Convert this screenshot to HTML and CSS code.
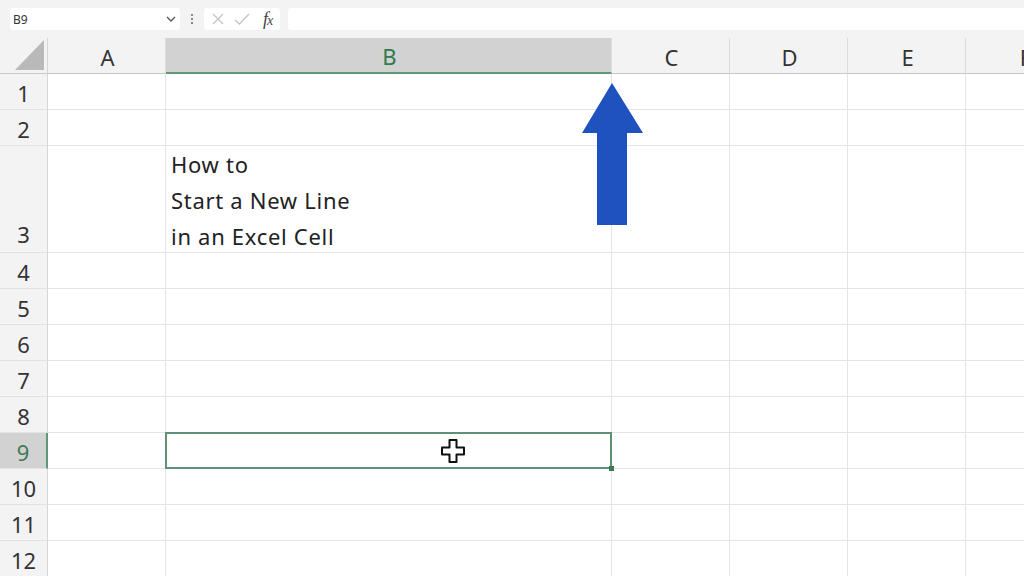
FILE: index.html
```html
<!DOCTYPE html>
<html>
<head>
<meta charset="utf-8">
<link rel="stylesheet" href="styles.css">
</head>
<body>
<div class="app">
  <div class="toolbar">
    <div class="namebox">
      <span class="ref">B9</span>
      <svg class="chev" width="10" height="6" viewBox="0 0 10 6"><path d="M1 1 L5 5 L9 1" fill="none" stroke="#555" stroke-width="1.3"/></svg>
    </div>
    <div class="dots"><span></span><span></span><span></span></div>
    <div class="fxgroup">
      <svg width="14" height="14" viewBox="0 0 14 14"><path d="M2 2 L12 12 M12 2 L2 12" stroke="#c4c4c4" stroke-width="1.3" fill="none"/></svg>
      <svg width="16" height="14" viewBox="0 0 16 14"><path d="M1 8 L5.5 12 L15 2" stroke="#c4c4c4" stroke-width="1.3" fill="none"/></svg>
      <span class="fx"><i>f</i><i class="x">x</i></span>
    </div>
    <div class="formula"></div>
  </div>

  <div class="sheet">
    <div class="corner"><svg width="30" height="31" viewBox="0 0 30 31"><path d="M29 0 L29 30 L0 30 Z" fill="#b9b9b9"/></svg></div>
    <div class="ch">A</div><div class="ch selcol">B</div><div class="ch">C</div><div class="ch">D</div><div class="ch">E</div><div class="ch">F</div>

    <div class="rh">1</div><div class="c"></div><div class="c"></div><div class="c"></div><div class="c"></div><div class="c"></div><div class="c"></div>
    <div class="rh">2</div><div class="c"></div><div class="c"></div><div class="c"></div><div class="c"></div><div class="c"></div><div class="c"></div>
    <div class="rh tall">3</div><div class="c"></div><div class="c txt">How to<br>Start a New Line<br>in an Excel Cell</div><div class="c"></div><div class="c"></div><div class="c"></div><div class="c"></div>
    <div class="rh">4</div><div class="c"></div><div class="c"></div><div class="c"></div><div class="c"></div><div class="c"></div><div class="c"></div>
    <div class="rh">5</div><div class="c"></div><div class="c"></div><div class="c"></div><div class="c"></div><div class="c"></div><div class="c"></div>
    <div class="rh">6</div><div class="c"></div><div class="c"></div><div class="c"></div><div class="c"></div><div class="c"></div><div class="c"></div>
    <div class="rh">7</div><div class="c"></div><div class="c"></div><div class="c"></div><div class="c"></div><div class="c"></div><div class="c"></div>
    <div class="rh">8</div><div class="c"></div><div class="c"></div><div class="c"></div><div class="c"></div><div class="c"></div><div class="c"></div>
    <div class="rh selrow">9</div><div class="c"></div><div class="c active"></div><div class="c"></div><div class="c"></div><div class="c"></div><div class="c"></div>
    <div class="rh">10</div><div class="c"></div><div class="c"></div><div class="c"></div><div class="c"></div><div class="c"></div><div class="c"></div>
    <div class="rh">11</div><div class="c"></div><div class="c"></div><div class="c"></div><div class="c"></div><div class="c"></div><div class="c"></div>
    <div class="rh">12</div><div class="c"></div><div class="c"></div><div class="c"></div><div class="c"></div><div class="c"></div><div class="c"></div>
  </div>

  <svg class="arrow" width="62" height="144" viewBox="0 0 62 144"><path d="M30 0 L61 50 L45 50 L45 142 L15 142 L15 50 L0 50 Z" fill="#1f51bf"/></svg>

  <svg class="cursor" width="26" height="26" viewBox="0 0 26 26"><path d="M9.5 2 H16.5 V9.5 H24 V16.5 H16.5 V24 H9.5 V16.5 H2 V9.5 H9.5 Z" fill="#fff" stroke="#111" stroke-width="2" stroke-linejoin="round"/></svg>
</div>
</body>
</html>
```

FILE: styles.css
```css
* { box-sizing: border-box; }
html, body { margin: 0; padding: 0; }
body {
  width: 1024px;
  height: 576px;
  overflow: hidden;
  background: #fff;
  font-family: "Noto Sans", "Open Sans", sans-serif;
  color: #222;
}
.app {
  position: relative;
  width: 1024px;
  height: 576px;
  overflow: hidden;
}

/* toolbar / formula bar */
.toolbar {
  height: 38px;
  background: #f3f3f3;
  display: flex;
  align-items: flex-start;
  padding: 8px 0 0 10px;
}
.namebox {
  width: 170px;
  height: 22px;
  background: #fff;
  border-radius: 3px;
  display: flex;
  align-items: center;
  justify-content: space-between;
  padding: 0 4px 0 3px;
}
.ref { font-size: 12px; color: #333; }
.dots {
  width: 24px;
  height: 22px;
  display: flex;
  flex-direction: column;
  align-items: center;
  justify-content: center;
  gap: 2px;
}
.dots span { width: 2px; height: 2px; background: #666; border-radius: 1px; }
.fxgroup {
  width: 76px;
  height: 22px;
  background: #fff;
  border-radius: 3px;
  display: flex;
  align-items: center;
  gap: 9px;
  padding-left: 7px;
}
.fx {
  font-family: "Liberation Serif", serif;
  font-size: 18px;
  color: #444;
  letter-spacing: -1px;
  margin-left: 4px;
  line-height: 1;
}
.fx .x { font-size: 14px; }
.formula {
  margin-left: 8px;
  flex: 1;
  height: 22px;
  background: #fff;
  border-radius: 3px 0 0 3px;
}

/* sheet grid */
.sheet {
  width: 1084px;
  display: grid;
  grid-template-columns: 48px 118px 446px 118px 118px 118px 118px;
  grid-template-rows: 36px 36px 36px 107px repeat(9, 36px);
}
.corner {
  background: #f3f3f3;
  border-right: 1px solid #d6d6d6;
  border-bottom: 1px solid #c8c8c8;
  display: flex;
  align-items: flex-end;
  justify-content: flex-end;
  padding: 0 2px 2px 0;
}
.ch {
  background: #f3f3f3;
  border-right: 1px solid #dcdcdc;
  border-bottom: 1px solid #c8c8c8;
  display: flex;
  align-items: center;
  justify-content: center;
  font-size: 22px;
  color: #333;
  padding-top: 2px;
  padding-left: 2px;
}
.ch.selcol {
  background: #d2d2d2;
  color: #2f7a4c;
  border-bottom: 2px solid #5c9a76;
}
.rh {
  background: #f3f3f3;
  border-right: 1px solid #d6d6d6;
  border-bottom: 1px solid #e2e2e2;
  display: flex;
  align-items: center;
  justify-content: center;
  font-size: 22px;
  color: #333;
  padding-top: 2px;
}
.rh.tall { align-items: flex-end; padding-bottom: 3px; }
.rh.selrow {
  background: #d2d2d2;
  color: #3f7a58;
  border-right: 2px solid #5c9a76;
}
.c {
  border-right: 1px solid #e4e4e4;
  border-bottom: 1px solid #e4e4e4;
  position: relative;
}
.txt {
  font-size: 22px;
  letter-spacing: 0.7px;
  line-height: 36px;
  padding-left: 5px;
  color: #222;
  white-space: nowrap;
}
.active::after {
  content: "";
  position: absolute;
  top: -1px;
  left: -1px;
  right: -1px;
  bottom: -1px;
  border: 2px solid #5f9176;
}
.active::before {
  content: "";
  position: absolute;
  right: -3px;
  bottom: -3px;
  width: 5px;
  height: 5px;
  background: #3d7a57;
  z-index: 1;
}

/* overlays */
.arrow {
  position: absolute;
  left: 582px;
  top: 83px;
}
.cursor {
  position: absolute;
  left: 440px;
  top: 438px;
}
```
